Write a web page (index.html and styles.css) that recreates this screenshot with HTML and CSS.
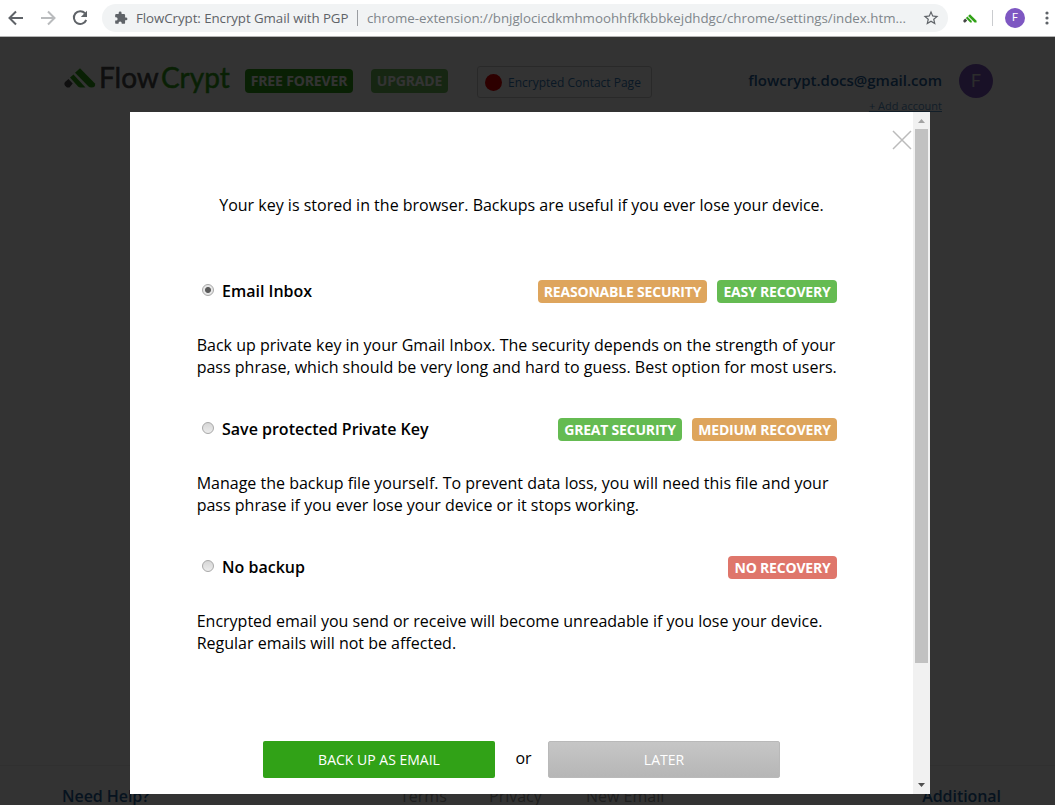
FILE: index.html
```html
<!DOCTYPE html>
<html lang="en">
<head>
<meta charset="utf-8">
<title>FlowCrypt: Encrypt Gmail with PGP</title>
<link rel="stylesheet" href="styles.css">
</head>
<body>
<div class="toolbar">
  <svg class="nav-icon" viewBox="0 0 16 16" width="16" height="16"><path d="M15 8H2M8 1.5L1.5 8L8 14.5" fill="none" stroke="#5f6368" stroke-width="2"/></svg>
  <svg class="nav-icon" viewBox="0 0 16 16" width="16" height="16"><path d="M1 8h13M8 1.5L14.5 8L8 14.5" fill="none" stroke="#b9bbbd" stroke-width="2"/></svg>
  <svg class="nav-icon" viewBox="0 0 16 16" width="16" height="16"><path d="M13 3.2A6.4 6.4 0 1 0 14.2 10" fill="none" stroke="#5f6368" stroke-width="2"/><path d="M15 0.8V7H8.8z" fill="#5f6368"/></svg>
  <div class="omnibox">
    <svg class="puzzle" viewBox="0 0 24 24" width="14" height="14"><path fill="#5f6368" d="M20.500 11H19V7a2 2 0 0 0-2-2h-4V3.500a2.500 2.500 0 0 0-5 0V5H4a2 2 0 0 0-2 2v3.800h1.500a2.700 2.700 0 0 1 0 5.400H2V20a2 2 0 0 0 2 2h3.800v-1.500a2.700 2.700 0 0 1 5.400 0V22H17a2 2 0 0 0 2-2v-4h1.500a2.500 2.500 0 0 0 0-5z"/></svg>
    <span class="site-name">FlowCrypt: Encrypt Gmail with PGP</span>
    <span class="divider"></span>
    <span class="url">chrome-extension://bnjglocicdkmhmoohhfkfkbbkejdhdgc/chrome/settings/index.htm...</span>
    <svg class="star" viewBox="0 0 24 24" width="18" height="18"><path fill="#5f6368" d="M22 9.240l-7.190-.620L12 2 9.190 8.630 2 9.240l5.460 4.730L5.820 21 12 17.270 18.180 21l-1.630-7.030L22 9.240zM12 15.400l-3.760 2.270 1-4.280-3.320-2.880 4.380-.380L12 6.100l1.710 4.040 4.380.380-3.320 2.880 1 4.280L12 15.400z"/></svg>
  </div>
  <svg class="ext" viewBox="0 0 32 20" width="14" height="9"><path d="M1 14L5 10L9.500 14.500L5 19H2.500Q0 17 1 14z" fill="#444"/><path d="M6.500 9L10 5.500L20 15.500V19H16.500z" fill="#31a217"/><path d="M11.500 4L16 0L31 15V19H26.500z" fill="#31a217"/></svg>
  <span class="bar-line"></span>
  <span class="mini-avatar">F</span>
  <svg class="dots" viewBox="0 0 4 14" width="4" height="14"><circle cx="2" cy="2" r="1.600"/><circle cx="2" cy="7" r="1.600"/><circle cx="2" cy="12" r="1.600"/></svg>
</div>
<div class="page">
  <header class="header">
    <svg class="logo-mark" viewBox="0 0 32 20" width="32" height="20"><path d="M1 14L4.500 11L8.700 15.500L5.500 19.500H3Q-1 17 1 14z" fill="#4a4a4a"/><path d="M6 9.500L9.500 6.500L21.500 19.500H16.500Q15 19.500 14 18.500z" fill="#31a217"/><path d="M11 4.800L16 .300L31 15.500Q32 19.500 27.500 19.500Q25.500 19.500 24.500 18.500z" fill="#31a217"/></svg>
    <span class="logo-flow">Flow</span><span class="logo-crypt">Crypt</span>
    <span class="tag free">FREE FOREVER</span>
    <span class="tag upgrade">UPGRADE</span>
    <span class="contact"><i class="red-dot"></i><span class="contact-text">Encrypted Contact Page</span></span>
    <div class="account"><b class="mail">flowcrypt.docs@gmail.com</b><span class="add">+ Add account</span></div>
    <span class="avatar">F</span>
  </header>
  <footer class="footer">
    <b class="help">Need Help?</b><span class="terms">Terms</span><span class="privacy">Privacy</span><span class="new-email">New Email</span><b class="additional">Additional</b>
  </footer>
  <div class="overlay">
    <div class="modal">
      <main class="pane">
        <svg class="close" viewBox="0 0 20 20" width="20" height="20"><path d="M1 1L19 19M19 1L1 19" stroke="#bbb" stroke-width="1.500"/></svg>
        <p class="intro"><span>Your key is stored in the browser. Backups are useful if you ever lose your device.</span></p>
        <section class="option">
          <div class="row"><i class="radio checked"></i><b class="name">Email Inbox</b><span class="badge orange b1">REASONABLE SECURITY</span><span class="badge green b2">EASY RECOVERY</span></div>
          <p class="desc">Back up private key in your Gmail Inbox. The security depends on the strength of your<br>pass phrase, which should be very long and hard to guess. Best option for most users.</p>
        </section>
        <section class="option">
          <div class="row"><i class="radio"></i><b class="name">Save protected Private Key</b><span class="badge green b3">GREAT SECURITY</span><span class="badge orange b4">MEDIUM RECOVERY</span></div>
          <p class="desc">Manage the backup file yourself. To prevent data loss, you will need this file and your<br>pass phrase if you ever lose your device or it stops working.</p>
        </section>
        <section class="option">
          <div class="row"><i class="radio"></i><b class="name">No backup</b><span class="badge red b5">NO RECOVERY</span></div>
          <p class="desc">Encrypted email you send or receive will become unreadable if you lose your device.<br>Regular emails will not be affected.</p>
        </section>
        <div class="actions"><span class="btn primary">BACK UP AS EMAIL</span><span class="or">or</span><span class="btn later">LATER</span></div>
      </main>
      <div class="scrollbar">
        <svg viewBox="0 0 7 4" width="7" height="4"><path d="M0 4L3.500 0L7 4z" fill="#a3a3a3"/></svg>
        <div class="thumb"></div>
        <svg class="down" viewBox="0 0 7 4" width="7" height="4"><path d="M0 0L3.500 4L7 0z" fill="#505050"/></svg>
      </div>
    </div>
  </div>
</div>
</body>
</html>
```
FILE: styles.css
```css
* { box-sizing: border-box; }
body { margin: 0; width: 1055px; height: 805px; overflow: hidden; font-family: "Open Sans", sans-serif; color: #000; }
b { font-weight: 600; }
span, b { white-space: nowrap; }
svg { display: block; flex: none; }
.toolbar { height: 37px; display: flex; align-items: center; padding-left: 8px; background: #fff; border-bottom: 1px solid #b4b4b4; }
.nav-icon { margin-right: 16px; }
.omnibox { width: 846px; height: 28px; margin-left: -2px; border-radius: 14px; background: #f1f3f4; display: flex; align-items: center; padding-left: 12px; font-size: 13.300px; flex: none; }
.site-name { width: 213px; margin-left: 8px; color: #5f6368; flex: none; letter-spacing: -.060px; }
.divider { width: 1px; height: 16px; margin: 0 9px 0 8px; background: #9a9da1; flex: none; }
.url { width: 541px; color: #80868b; flex: none; letter-spacing: -.006px; }
.star { margin-left: 14px; }
.ext { margin-left: 15px; }
.bar-line { width: 1px; height: 16px; margin-left: 15px; background: #cacccf; }
.mini-avatar { width: 20px; height: 20px; margin-left: 12px; border-radius: 50%; background: #7e57c2; color: #fff; font: 11px/20px Roboto, sans-serif; text-align: center; }
.dots { margin-left: 20px; fill: #5f6368; }
.page { position: relative; height: 768px; background: #fff; display: flex; flex-direction: column; justify-content: space-between; }
.header { height: 90px; padding: 22px 61px 0 64px; display: flex; align-items: flex-start; }
.logo-mark { margin-top: 9px; }
.logo-flow, .logo-crypt { font: 28px/37px Lato, sans-serif; -webkit-text-stroke: .500px currentColor; }
.logo-flow { margin-left: 3px; width: 62px; color: #4a4a4a; }
.logo-crypt { width: 68px; color: #31a217; }
.tag { height: 24px; margin-top: 10px; border-radius: 4px; background: #31a217; color: #fff; font-size: 14px; line-height: 24px; font-weight: 700; text-align: center; letter-spacing: -.150px; }
.free { width: 108px; margin-left: 16px; }
.upgrade { width: 77px; margin-left: 18px; opacity: .7; }
.contact { width: 175px; height: 32px; margin: 7px 0 0 29px; border: 1px solid #ccc; border-radius: 3px; display: flex; align-items: center; padding-left: 7px; font-size: 12px; color: #337ab7; flex: none; }
.red-dot { width: 17px; height: 17px; border-radius: 50%; background: #e00000; margin-right: 6px; flex: none; }
.account { margin-left: auto; display: flex; flex-direction: column; align-items: flex-end; }
.mail { font-size: 15px; line-height: 22px; margin-top: 10px; color: #246299; }
.add { font-size: 11px; line-height: 17px; margin-top: 6px; color: #337ab7; text-decoration: underline; opacity: .8; }
.avatar { width: 34px; height: 34px; margin: 5px 1px 0 17px; border-radius: 50%; background: #7e57c2; color: #ddd; font: 18px/34px Roboto, sans-serif; text-align: center; flex: none; }
.footer { height: 40px; border-top: 1px solid #eee; padding: 19px 54px 0 62px; display: flex; font-size: 16px; line-height: 22px; color: #999; }
.help, .additional { color: #246299; letter-spacing: -.060px; }
.help { width: 338px; }
.terms { width: 89px; }
.privacy { width: 97px; }
.additional { margin-left: auto; }
.overlay { position: absolute; inset: 0; background: rgba(0, 0, 0, .8); padding: 75px 125px 0 130px; }
.modal { height: 682px; display: flex; background: #fff; }
.pane { position: relative; width: 783px; padding: 82px 66px 0; font-size: 16px; line-height: 22px; }
.close { position: absolute; right: 1px; top: 17.500px; }
.intro { margin: 0 0 63px; text-align: center; }
.option { height: 138px; }
.row { height: 24px; display: flex; align-items: center; padding: 0 10px 0 6px; }
.radio { width: 12px; height: 12px; margin: -2px 8px 0 0; border: 1px solid #a8a8a8; border-radius: 50%; background: linear-gradient(#d6d6d6, #ececec); }
.checked { background: radial-gradient(circle, #5a5a5a 0 2.500px, #e6e6e6 3.500px); }
.name { margin-right: auto; }
.badge { height: 23px; margin-left: 10px; border-radius: 4px; color: #fff; font-size: 14px; line-height: 24px; font-weight: 700; text-align: center; letter-spacing: -.200px; }
.orange { background: #dea55d; }
.green { background: #65bb52; }
.red { background: #df766b; }
.b1 { width: 169px; }
.b2 { width: 120px; }
.b3 { width: 124px; }
.b4 { width: 145px; }
.b5 { width: 109px; }
.desc { margin: 31px 0 0; padding-left: .700px; white-space: nowrap; }
.actions { display: flex; margin: 48px 0 0 67px; }
.btn { width: 232px; height: 37px; border-radius: 2px; color: #fff; font-size: 14px; line-height: 38px; text-align: center; }
.primary { background: #31a217; }
.later { background: linear-gradient(#c6c6c6, #b6b6b6); border: 1px solid #b9b9b9; line-height: 36px; }
.or { width: 53px; padding-top: 6px; text-align: center; padding-left: 4px; }
.scrollbar { width: 17px; background: #f1f1f1; display: flex; flex-direction: column; align-items: center; padding: 7px 0; }
.thumb { width: 13px; height: 534px; margin-top: 6px; background: #c1c1c1; }
.down { margin-top: auto; }
```
